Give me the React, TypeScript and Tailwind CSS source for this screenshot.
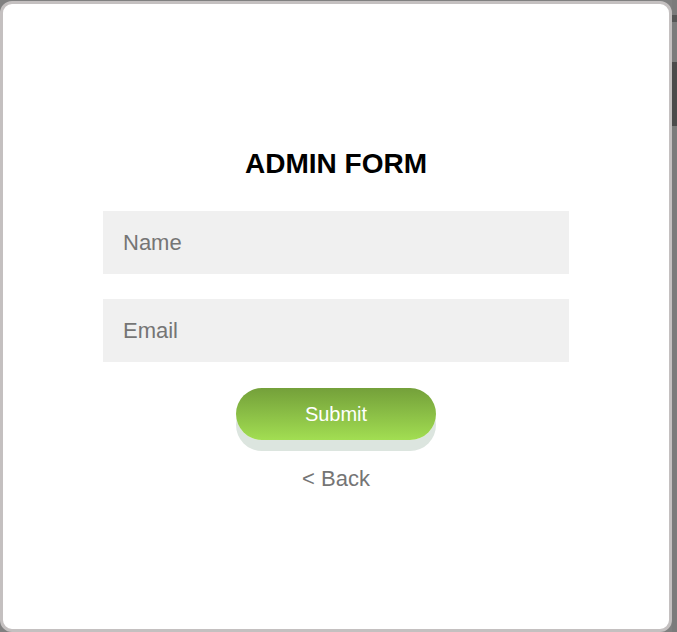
export default function App() {
  return (
    <div className="flex h-[632px] w-[677px] overflow-hidden bg-[#808080] font-['Liberation_Sans',Arial,sans-serif]">
      <div className="mt-[1px] flex h-[631px] w-[672px] flex-col items-center rounded-[12px] border-[3px] border-[#c4c0c0] bg-white pt-[144px]">
        <h1 className="text-[28px] leading-[32px] font-bold text-black">ADMIN FORM</h1>
        <form className="mt-[31px] flex w-[466px] flex-col items-center" onSubmit={(e) => e.preventDefault()}>
          <input
            type="text"
            placeholder="Name"
            className="h-[63px] w-full bg-[#f0f0f0] px-[20px] text-[22px] text-black outline-none placeholder:text-[#757575]"
          />
          <input
            type="email"
            placeholder="Email"
            className="mt-[25px] h-[63px] w-full bg-[#f0f0f0] px-[20px] text-[22px] text-black outline-none placeholder:text-[#757575]"
          />
          <button
            type="submit"
            className="mt-[26px] h-[52px] w-[200px] rounded-full bg-gradient-to-b from-[#74a03a] to-[#a2de52] text-[20px] text-white shadow-[0_11px_0_#dce5df]"
          >
            Submit
          </button>
          <a href="#" className="mt-[26px] text-[22px] leading-[26px] text-[#757575]">
            &lt; Back
          </a>
        </form>
      </div>
      <div className="flex flex-1 flex-col">
        <div className="h-[15px] bg-[#7b7b7b]" />
        <div className="h-[7px] bg-[#565656]" />
        <div className="h-[40px] bg-[#7b7b7b]" />
        <div className="h-[64px] bg-[#4b4b4b]" />
        <div className="flex-1 bg-[#7b7b7b]" />
      </div>
    </div>
  )
}
